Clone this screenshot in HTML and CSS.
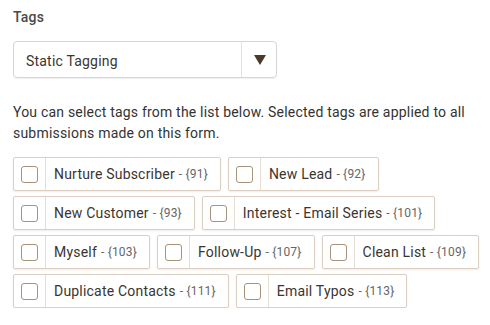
FILE: index.html
```html
<!DOCTYPE html>
<html lang="en">
<head>
    <meta charset="UTF-8">
    <title>Tags</title>
    <link rel="stylesheet" href="styles.css">
</head>
<body>
    <div class="tags-field">
        <div class="field-label">Tags</div>
        <div class="select-box">
            <span class="select-value">Static Tagging</span>
            <span class="select-arrow"><span class="triangle"></span></span>
        </div>
        <p class="help-text">You can select tags from the list below. Selected tags are applied to all submissions made on this form.</p>
        <div class="tag-list">
            <label class="tag"><span class="tag-check"><span class="box"></span></span><span class="tag-name">Nurture Subscriber<small>- {91}</small></span></label>
            <label class="tag"><span class="tag-check"><span class="box"></span></span><span class="tag-name">New Lead<small>- {92}</small></span></label>
            <label class="tag"><span class="tag-check"><span class="box"></span></span><span class="tag-name">New Customer<small>- {93}</small></span></label>
            <label class="tag"><span class="tag-check"><span class="box"></span></span><span class="tag-name">Interest - Email Series<small>- {101}</small></span></label>
            <label class="tag"><span class="tag-check"><span class="box"></span></span><span class="tag-name">Myself<small>- {103}</small></span></label>
            <label class="tag"><span class="tag-check"><span class="box"></span></span><span class="tag-name">Follow-Up<small>- {107}</small></span></label>
            <label class="tag"><span class="tag-check"><span class="box"></span></span><span class="tag-name">Clean List<small>- {109}</small></span></label>
            <label class="tag"><span class="tag-check"><span class="box"></span></span><span class="tag-name">Duplicate Contacts<small>- {111}</small></span></label>
            <label class="tag"><span class="tag-check"><span class="box"></span></span><span class="tag-name">Email Typos<small>- {113}</small></span></label>
        </div>
    </div>
</body>
</html>
```

FILE: styles.css
```css
body {
    margin: 0;
    font-family: Roboto, "Liberation Sans", sans-serif;
    letter-spacing: 0.2px;
    color: #3a3530;
    background: #fff;
}

.tags-field {
    padding: 9px 0 0 13px;
    max-width: 470px;
}

.field-label {
    font-size: 14px;
    font-weight: 500;
    color: #4a4a4a;
    line-height: 17px;
}

.select-box {
    display: flex;
    width: 264px;
    height: 37px;
    margin-top: 15px;
    box-sizing: border-box;
    border: 1px solid #d6d6d6;
    border-radius: 4px;
    box-shadow: 0 1px 1px rgba(0, 0, 0, 0.06);
}

.select-value {
    flex: 1;
    display: flex;
    align-items: center;
    padding: 2px 0 0 12px;
    font-size: 14px;
    color: #3a3530;
}

.select-arrow {
    width: 32px;
    border-left: 1px solid #e2e2e2;
    display: flex;
    align-items: center;
    justify-content: center;
    padding-left: 2px;
}

.triangle {
    width: 0;
    height: 0;
    border-left: 6px solid transparent;
    border-right: 6px solid transparent;
    border-top: 10px solid #4b3a2a;
}

.help-text {
    margin: 24px 0 0 0;
    font-size: 14px;
    line-height: 21px;
    color: #333;
}

.tag-list {
    display: flex;
    flex-wrap: wrap;
    gap: 5px 7px;
    margin-top: 13px;
}

.tag {
    display: flex;
    height: 34px;
    box-sizing: border-box;
    border: 1px solid #dccfc2;
    border-radius: 2px;
    box-shadow: 0 1px 2px rgba(0, 0, 0, 0.08);
}

.tag-check {
    width: 31px;
    border-right: 1px solid #e6ddd3;
    display: flex;
    align-items: center;
    justify-content: center;
}

.box {
    width: 15px;
    height: 15px;
    border: 1px solid #a8927a;
    border-radius: 3px;
    background: #fff;
}

.tag-name {
    display: flex;
    align-items: center;
    gap: 4px;
    padding: 0 12px 0 8px;
    font-size: 14px;
    white-space: nowrap;
    color: #3a3530;
}

.tag-name small {
    font-size: 12px;
    color: #666;
}
```
